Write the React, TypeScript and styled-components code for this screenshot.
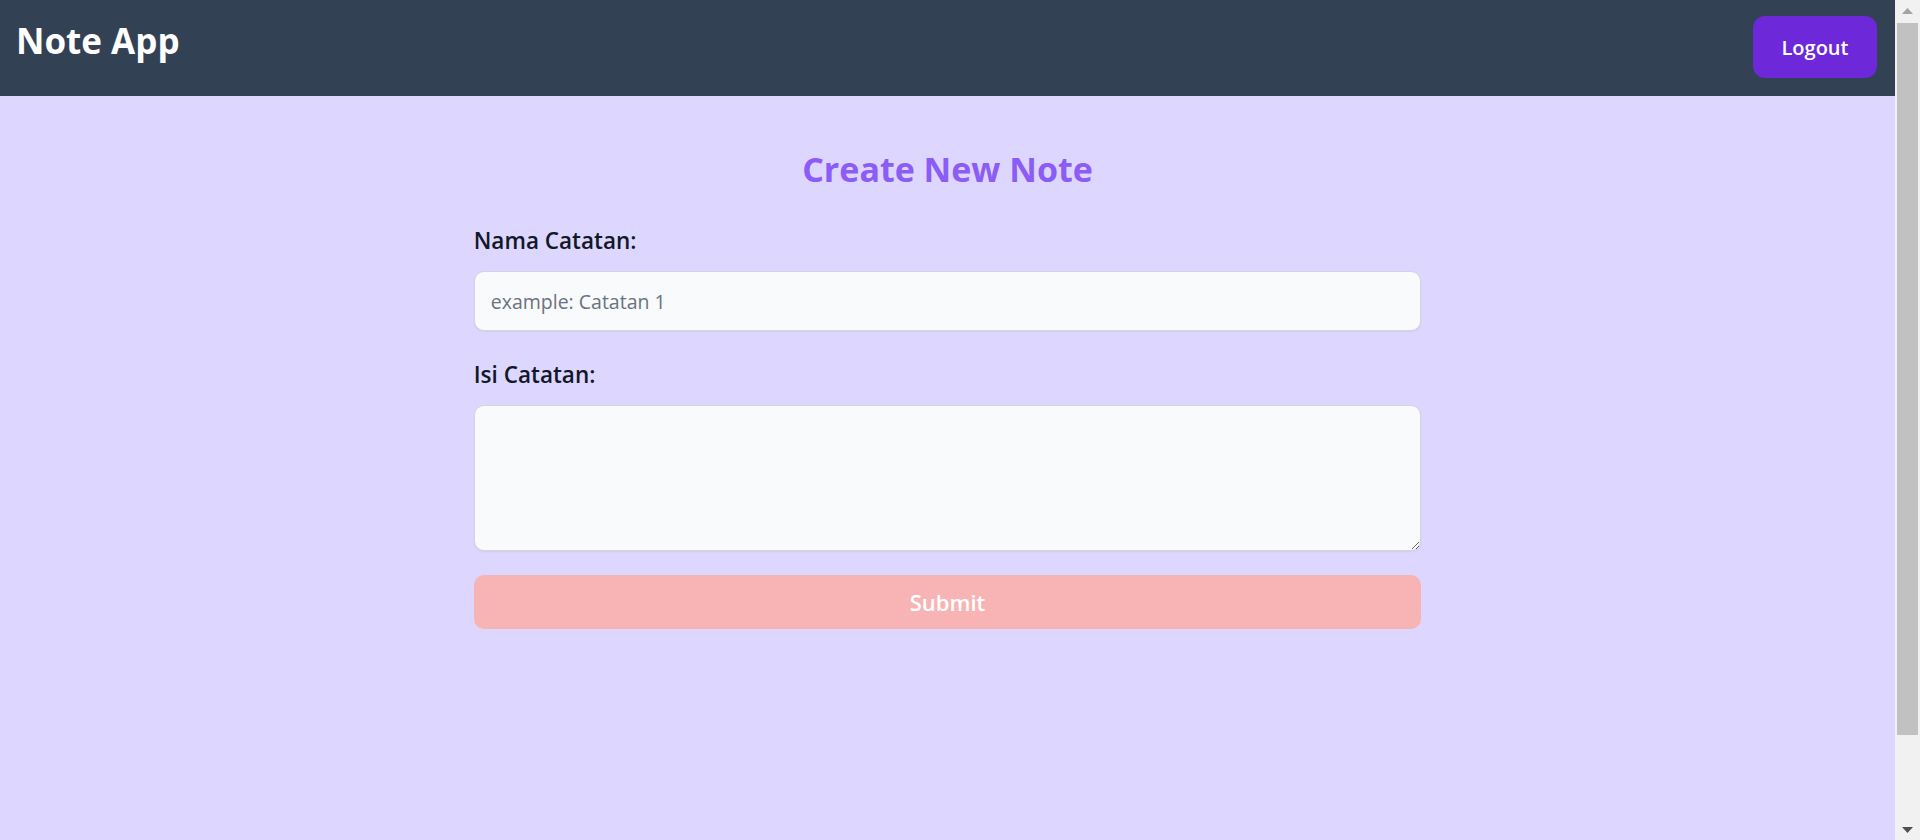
import React, { useState } from "react";
import styled, { createGlobalStyle } from "styled-components";

const GlobalStyle = createGlobalStyle`
  html, body {
    margin: 0;
    padding: 0;
    height: 100%;
    overflow: hidden;
    background: #ddd6fe;
  }
  body {
    font-family: "Open Sans", "Noto Sans", "Liberation Sans", sans-serif;
  }
  * { box-sizing: border-box; }
`;

const Shell = styled.div`
  display: flex;
  height: 100vh;
  background: #ddd6fe;
`;

const Page = styled.div`
  flex: 1;
  min-width: 0;
  display: flex;
  flex-direction: column;
  overflow: hidden;
`;

const Header = styled.header`
  flex: none;
  display: flex;
  justify-content: space-between;
  align-items: flex-start;
  height: 96px;
  padding: 16px 18px 18px 16px;
  background: #334155;
`;

const Brand = styled.h1`
  margin: 5px 0 0;
  font-size: 35px;
  line-height: 40px;
  font-weight: 700;
  color: #ffffff;
`;

const LogoutButton = styled.button`
  width: 124px;
  height: 62px;
  border: none;
  border-radius: 12px;
  background: #6d28d9;
  color: #ffffff;
  font-family: inherit;
  font-size: 20px;
  font-weight: 600;
  cursor: pointer;
`;

const Main = styled.main`
  flex: 1;
  display: flex;
  flex-direction: column;
  align-items: center;
  padding-top: 53px;
  background: #ddd6fe;
`;

const Title = styled.h2`
  margin: 0 0 36px;
  font-size: 34px;
  line-height: 40px;
  font-weight: 700;
  color: #8b5cf6;
  text-align: center;
`;

const Form = styled.form`
  width: 50%;
  display: flex;
  flex-direction: column;
`;

const Field = styled.div<{ $spacing: number }>`
  display: flex;
  flex-direction: column;
  margin-bottom: ${(p) => p.$spacing}px;
`;

const Label = styled.label`
  margin-bottom: 14px;
  font-size: 22.5px;
  line-height: 32px;
  font-weight: 600;
  color: #111827;
`;

const fieldBase = `
  width: 100%;
  padding: 15px 16px;
  border: 1px solid #d6d3e0;
  border-radius: 10px;
  background: #f8fafc;
  box-shadow: 0 1px 2px rgba(0, 0, 0, 0.06);
  font-family: inherit;
  font-size: 19.5px;
  line-height: 28px;
  color: #111827;
  outline: none;
  &::placeholder {
    color: #6b7280;
  }
`;

const TextInput = styled.input`
  ${fieldBase}
  height: 60px;
`;

const TextArea = styled.textarea`
  ${fieldBase}
  display: block;
  height: 146px;
`;

const SubmitButton = styled.button`
  width: 100%;
  height: 54px;
  border: none;
  border-radius: 10px;
  background: #f8b4b4;
  color: #ffffff;
  font-family: inherit;
  font-size: 22px;
  font-weight: 600;
  cursor: not-allowed;
`;

/* Window scrollbar (browser chrome in the reference) */
const Scrollbar = styled.div`
  flex: none;
  width: 25px;
  display: flex;
  flex-direction: column;
  background: #f1f1f1;
`;

const ScrollButton = styled.div`
  flex: none;
  height: 21px;
  display: flex;
  align-items: center;
  justify-content: center;
`;

const ScrollTrack = styled.div`
  flex: 1;
  padding: 2px 2px 0;
`;

const ScrollThumb = styled.div`
  height: 712px;
  background: #c1c1c1;
`;

const Arrow = ({ up, color }: { up?: boolean; color: string }) => (
  <svg width="11" height="6" viewBox="0 0 11 6" aria-hidden>
    <polygon points={up ? "0,6 11,6 5.5,0" : "0,0 11,0 5.5,6"} fill={color} />
  </svg>
);

export default function App() {
  const [title, setTitle] = useState("");
  const [body, setBody] = useState("");

  return (
    <>
      <GlobalStyle />
      <Shell>
        <Page>
          <Header>
            <Brand>Note App</Brand>
            <LogoutButton type="button">Logout</LogoutButton>
          </Header>
          <Main>
            <Title>Create New Note</Title>
            <Form onSubmit={(e) => e.preventDefault()}>
              <Field $spacing={28}>
                <Label htmlFor="note-title">Nama Catatan:</Label>
                <TextInput
                  id="note-title"
                  placeholder="example: Catatan 1"
                  value={title}
                  onChange={(e) => setTitle(e.target.value)}
                />
              </Field>
              <Field $spacing={24}>
                <Label htmlFor="note-body">Isi Catatan:</Label>
                <TextArea
                  id="note-body"
                  value={body}
                  onChange={(e) => setBody(e.target.value)}
                />
              </Field>
              <SubmitButton type="submit" disabled={!title || !body}>
                Submit
              </SubmitButton>
            </Form>
          </Main>
        </Page>
        <Scrollbar aria-hidden>
          <ScrollButton>
            <Arrow up color="#a3a3a3" />
          </ScrollButton>
          <ScrollTrack>
            <ScrollThumb />
          </ScrollTrack>
          <ScrollButton>
            <Arrow color="#505050" />
          </ScrollButton>
        </Scrollbar>
      </Shell>
    </>
  );
}
